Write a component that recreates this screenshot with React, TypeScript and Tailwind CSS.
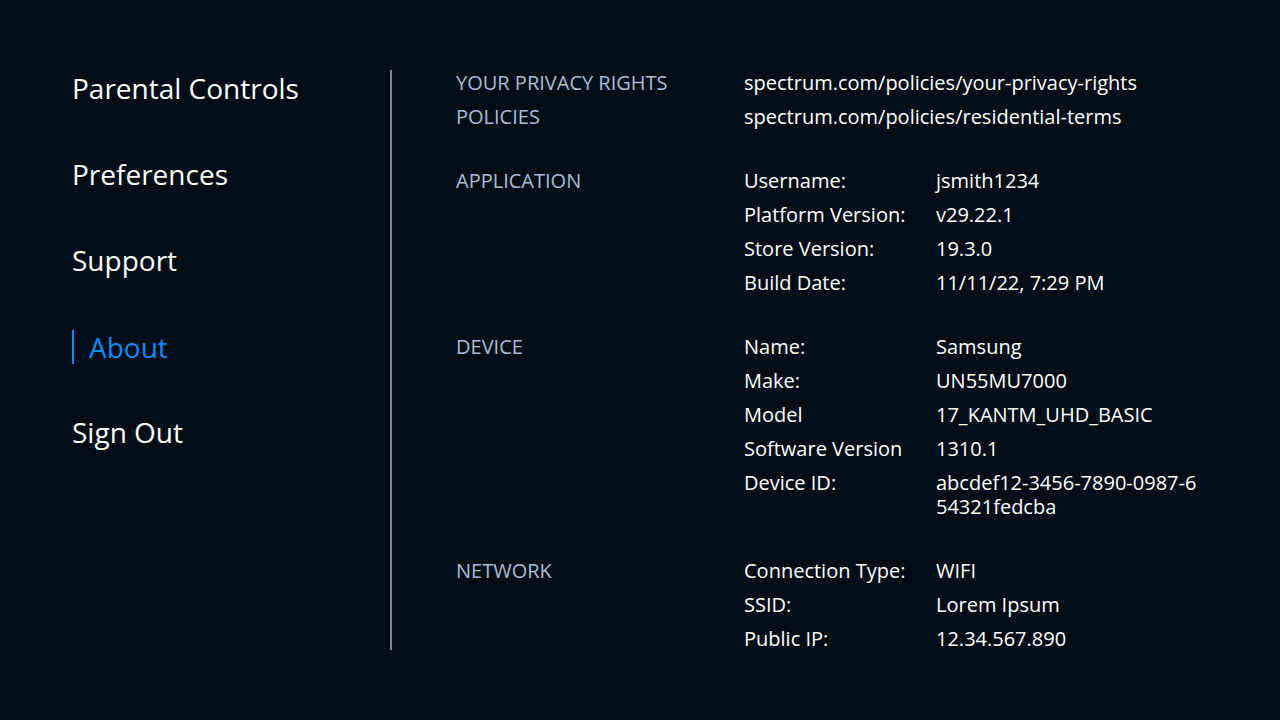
import React from 'react'

type Row = { key: string; value: string }

interface Section {
    label: string
    rows?: Row[]
    links?: { label: string; url: string }[]
}

const NAV_ITEMS = ['Parental Controls', 'Preferences', 'Support', 'About', 'Sign Out']
const ACTIVE = 'About'

const SECTIONS: Section[] = [
    {
        label: 'links',
        links: [
            { label: 'YOUR PRIVACY RIGHTS', url: 'spectrum.com/policies/your-privacy-rights' },
            { label: 'POLICIES', url: 'spectrum.com/policies/residential-terms' },
        ],
    },
    {
        label: 'APPLICATION',
        rows: [
            { key: 'Username:', value: 'jsmith1234' },
            { key: 'Platform Version:', value: 'v29.22.1' },
            { key: 'Store Version:', value: '19.3.0' },
            { key: 'Build Date:', value: '11/11/22, 7:29 PM' },
        ],
    },
    {
        label: 'DEVICE',
        rows: [
            { key: 'Name:', value: 'Samsung' },
            { key: 'Make:', value: 'UN55MU7000' },
            { key: 'Model', value: '17_KANTM_UHD_BASIC' },
            { key: 'Software Version', value: '1310.1' },
            { key: 'Device ID:', value: 'abcdef12-3456-7890-0987-654321fedcba' },
        ],
    },
    {
        label: 'NETWORK',
        rows: [
            { key: 'Connection Type:', value: 'WIFI' },
            { key: 'SSID:', value: 'Lorem Ipsum' },
            { key: 'Public IP:', value: '12.34.567.890' },
        ],
    },
]

const App = () => {
    return (
        <div
            className="w-[1280px] h-[720px] bg-[#020e17] text-white flex pt-[70px] overflow-hidden"
            style={{ fontFamily: '"Open Sans", "Noto Sans", sans-serif' }}
        >
            {/* side menu */}
            <div className="w-[390px] shrink-0 pl-[72px] flex flex-col">
                {NAV_ITEMS.map((item) => {
                    const active = item === ACTIVE
                    return (
                        <div key={item} className="h-[86px] flex items-start">
                            {active ? (
                                <div className="flex items-center gap-[15px] h-[38px]">
                                    <div className="w-[2px] h-[34px] bg-[#0d8bf5]" />
                                    <span className="text-[28px] leading-[36px] text-[#0d8bf5]">{item}</span>
                                </div>
                            ) : (
                                <span className="text-[28px] leading-[36px]">{item}</span>
                            )}
                        </div>
                    )
                })}
            </div>

            <div className="w-[2px] h-[580px] shrink-0 bg-[#7d858e]" />

            {/* details */}
            <div className="pl-[64px] pt-[1px] flex flex-col gap-[30px] text-[20px] leading-[24px]">
                {SECTIONS.map((section) =>
                    section.links ? (
                        <div key={section.label} className="flex flex-col">
                            {section.links.map((link) => (
                                <div key={link.label} className="flex pb-[10px]">
                                    <span className="w-[288px] shrink-0 text-[#a9bdd3]">{link.label}</span>
                                    <span className="whitespace-nowrap">{link.url}</span>
                                </div>
                            ))}
                        </div>
                    ) : (
                        <div key={section.label} className="flex">
                            <span className="w-[288px] shrink-0 text-[#a9bdd3]">{section.label}</span>
                            <div className="flex flex-col">
                                {section.rows?.map((row) => (
                                    <div key={row.key} className="flex pb-[10px]">
                                        <span className="w-[192px] shrink-0">{row.key}</span>
                                        <span className="w-[268px] break-all">{row.value}</span>
                                    </div>
                                ))}
                            </div>
                        </div>
                    )
                )}
            </div>
        </div>
    )
}

export default App
